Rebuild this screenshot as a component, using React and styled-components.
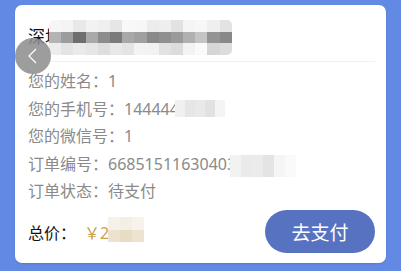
import React from "react";
import styled, { createGlobalStyle } from "styled-components";

const Global = createGlobalStyle`
  html, body { margin: 0; padding: 0; }
  body {
    background: #6289e3;
    font-family: "Noto Sans", "Noto Sans CJK SC", sans-serif;
    width: 401px;
    height: 271px;
    overflow: hidden;
  }
`;

const Page = styled.div`
  width: 401px;
  height: 271px;
  box-sizing: border-box;
  padding: 5px 15px 8px 15px;
`;

const Card = styled.div`
  position: relative;
  height: 258px;
  width: 371px;
  background: #fff;
  border-radius: 7px;
  box-shadow: 0 1px 2px rgba(0, 0, 0, 0.12);
  box-sizing: border-box;
  padding: 0 11px 0 13px;
  display: flex;
  flex-direction: column;
`;

const Header = styled.div`
  height: 57px;
  display: flex;
  align-items: center;
  border-bottom: 1px solid #f1f1f1;
  box-sizing: border-box;
`;

const Title = styled.div`
  font-size: 17px;
  color: #111;
  line-height: 20px;
  display: flex;
  align-items: center;
  margin-top: 7px;
`;

const Mosaic = styled.div`
  display: grid;
  grid-template-columns: repeat(${(p) => p.$cols}, ${(p) => p.$w}px);
  grid-auto-rows: ${(p) => p.$h}px;
  margin-left: ${(p) => p.$ml || 0}px;
  margin-top: ${(p) => p.$mt || 0}px;
  border-radius: ${(p) => p.$r || 0}px;
  overflow: hidden;
`;

const Cell = styled.div`
  background: ${(p) => p.$c};
`;

const BackButton = styled.div`
  position: absolute;
  left: 0;
  top: 33px;
  width: 36px;
  height: 36px;
  border-radius: 50%;
  background: rgba(140, 140, 140, 0.85);
  display: flex;
  align-items: center;
  justify-content: center;
`;

const Rows = styled.div`
  display: flex;
  flex-direction: column;
  gap: 7.5px;
  padding-top: 9px;
`;

const Row = styled.div`
  font-size: 16px;
  line-height: 20px;
  color: #8a8a8a;
  display: flex;
  align-items: center;
  height: 20px;
  white-space: nowrap;
`;

const Footer = styled.div`
  display: flex;
  align-items: center;
  justify-content: space-between;
  margin-top: 9px;
`;

const Total = styled.div`
  display: flex;
  align-items: center;
  font-size: 16px;
  color: #111;
`;

const Price = styled.span`
  color: #c9a150;
  font-size: 16px;
  margin-left: 8px;
`;

const PayButton = styled.button`
  width: 110px;
  height: 43px;
  border: none;
  border-radius: 22px;
  background: #5872c2;
  color: #fff;
  font-family: "Noto Sans CJK SC", "Noto Sans", sans-serif;
  font-size: 19px;
  padding: 0;
`;

const titleCells = [
  ["#f6f6f6", "#f4f4f4", "#e8e8e8", "#f2f2f2", "#efefef", "#e6e6e6", "#f8f8f8", "#f7f7f7", "#ececec", "#eeeeee", "#e2e2e2", "#f5f5f5", "#f7f7f7", "#efefef", "#e3e3e3"],
  ["#b4b4b4", "#9c9c9c", "#6e6e6e", "#a9a9a9", "#8c8c8c", "#7a7a7a", "#a8a8a8", "#a0a0a0", "#8a8a8a", "#909090", "#9a9a9a", "#b0b0b0", "#c4c4c4", "#939393", "#888888"],
  ["#ededed", "#e4e4e4", "#eaeaea", "#e6e6e6", "#dedede", "#e8e8e8", "#e4e4e4", "#f3f3f3", "#f2f2f2", "#e2e2e2", "#dcdcdc", "#f3f3f3", "#fafafa", "#d6d6d6", "#dcdcdc"],
];

const phoneCells = [["#f0f0f0", "#e6e6e6", "#e9e9e9", "#e2e2e2", "#f4f4f4"]];
const orderCells = [["#f2f2f2", "#eaeaea", "#ebebeb", "#e4e4e4", "#f5f5f5", "#fafafa"]];
const priceCells = [
  ["#f6f2ea", "#f4efe4", "#f7f3ec"],
  ["#ece2cf", "#e8dcc4", "#ece3d1"],
];

function Blocks({ data, w, h, ml, mt, r }) {
  return (
    <Mosaic $cols={data[0].length} $w={w} $h={h} $ml={ml} $mt={mt} $r={r}>
      {data.flat().map((c, i) => (
        <Cell key={i} $c={c} />
      ))}
    </Mosaic>
  );
}

export default function App() {
  return (
    <>
      <Global />
      <Page>
        <Card>
          <Header>
            <Title>
              深圳
              <Blocks data={titleCells} w={12.2} h={11.5} ml={-13} mt={2} r={5} />
            </Title>
          </Header>
          <BackButton>
            <svg width="14" height="18" viewBox="0 0 14 18">
              <path d="M10 2 L3 9 L10 16" fill="none" stroke="#fff" strokeWidth="1.2" />
            </svg>
          </BackButton>
          <Rows>
            <Row>您的姓名：1</Row>
            <Row>
              您的手机号：144444
              <Blocks data={phoneCells} w={10} h={17} ml={-4} />
            </Row>
            <Row>您的微信号：1</Row>
            <Row>
              订单编号：66851511630403
              <Blocks data={orderCells} w={11} h={22} ml={-6} mt={4} />
            </Row>
            <Row>订单状态：待支付</Row>
          </Rows>
          <Footer>
            <Total>
              总价：
              <Price>￥2</Price>
              <Blocks data={priceCells} w={12} h={12.5} ml={-1} mt={-4} />
            </Total>
            <PayButton>去支付</PayButton>
          </Footer>
        </Card>
      </Page>
    </>
  );
}
